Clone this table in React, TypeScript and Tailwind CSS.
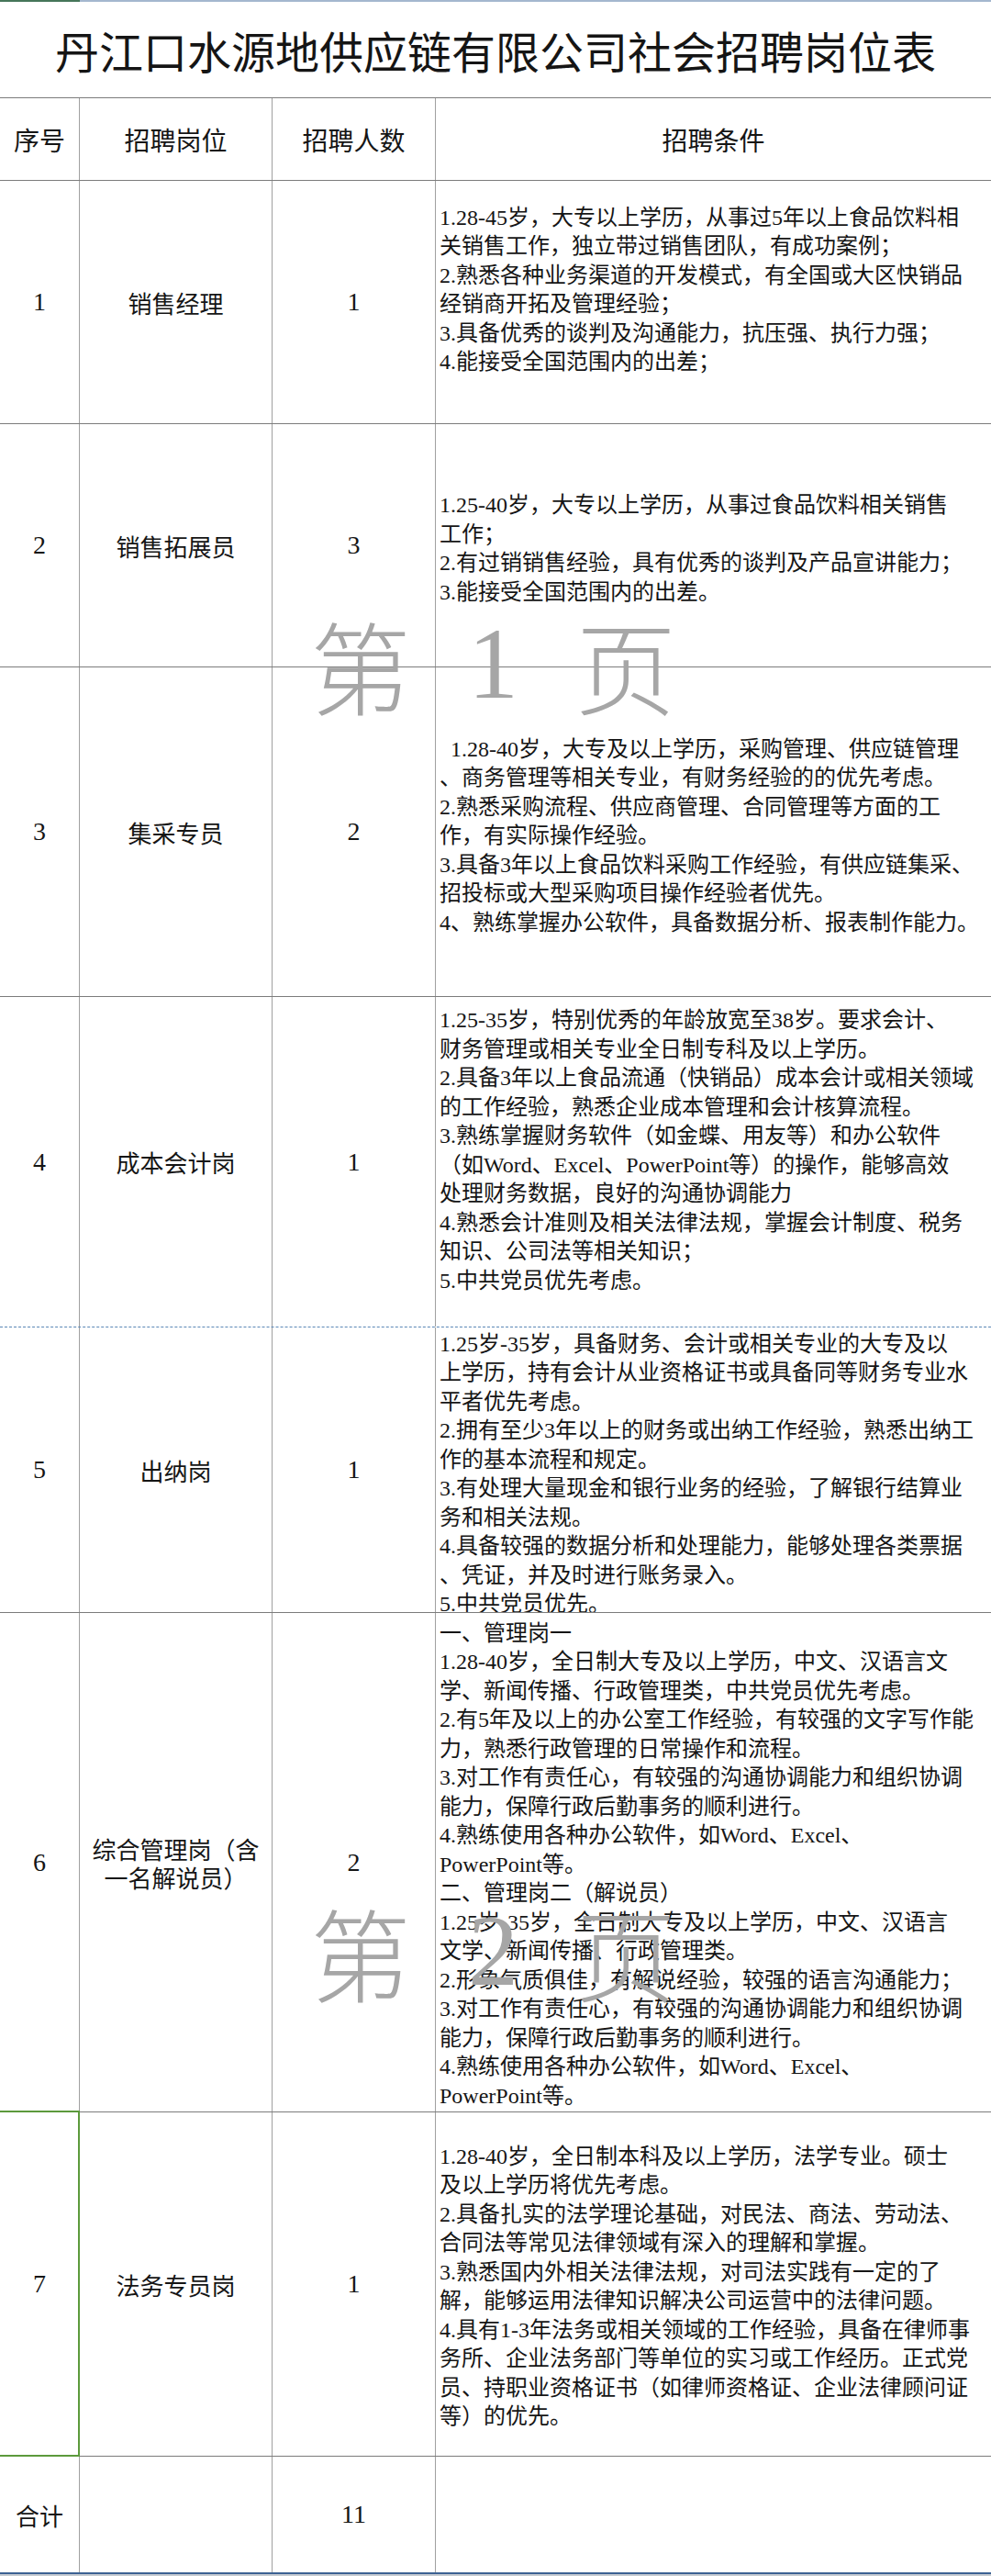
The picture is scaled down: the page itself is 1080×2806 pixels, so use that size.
import React from 'react';

type Row = {
  no: string;
  pos: string[];
  count: string;
  h: string;
  shift: string;
  lines: string[];
  bottom?: string;
  selected?: boolean;
};

const SANS = "font-['Noto_Sans_CJK_SC',sans-serif]";
const BODY = "font-['Liberation_Serif','Noto_Sans_CJK_SC',serif]";

const ROWS: Row[] = [
  {
    no: '1',
    pos: ['销售经理'],
    count: '1',
    h: 'h-[265px]',
    shift: 'pb-[26px]',
    lines: [
      '1.28-45岁，大专以上学历，从事过5年以上食品饮料相',
      '关销售工作，独立带过销售团队，有成功案例；',
      '2.熟悉各种业务渠道的开发模式，有全国或大区快销品',
      '经销商开拓及管理经验；',
      '3.具备优秀的谈判及沟通能力，抗压强、执行力强；',
      '4.能接受全国范围内的出差；',
    ],
  },
  {
    no: '2',
    pos: ['销售拓展员'],
    count: '3',
    h: 'h-[265px]',
    shift: 'pt-[8px]',
    lines: [
      '1.25-40岁，大专以上学历，从事过食品饮料相关销售',
      '工作；',
      '2.有过销销售经验，具有优秀的谈判及产品宣讲能力；',
      '3.能接受全国范围内的出差。',
    ],
  },
  {
    no: '3',
    pos: ['集采专员'],
    count: '2',
    h: 'h-[359px]',
    shift: 'pt-[10px]',
    lines: [
      '\u20021.28-40岁，大专及以上学历，采购管理、供应链管理',
      '、商务管理等相关专业，有财务经验的的优先考虑。',
      '2.熟悉采购流程、供应商管理、合同管理等方面的工',
      '作，有实际操作经验。',
      '3.具备3年以上食品饮料采购工作经验，有供应链集采、',
      '招投标或大型采购项目操作经验者优先。',
      '4、熟练掌握办公软件，具备数据分析、报表制作能力。',
    ],
  },
  {
    no: '4',
    pos: ['成本会计岗'],
    count: '1',
    h: 'h-[360px]',
    shift: 'pb-[24px]',
    bottom: 'border-dashed border-[#5b88b6]',
    lines: [
      '1.25-35岁，特别优秀的年龄放宽至38岁。要求会计、',
      '财务管理或相关专业全日制专科及以上学历。',
      '2.具备3年以上食品流通（快销品）成本会计或相关领域',
      '的工作经验，熟悉企业成本管理和会计核算流程。',
      '3.熟练掌握财务软件（如金蝶、用友等）和办公软件',
      '（如Word、Excel、PowerPoint等）的操作，能够高效',
      '处理财务数据，良好的沟通协调能力',
      '4.熟悉会计准则及相关法律法规，掌握会计制度、税务',
      '知识、公司法等相关知识；',
      '5.中共党员优先考虑。',
    ],
  },
  {
    no: '5',
    pos: ['出纳岗'],
    count: '1',
    h: 'h-[311px]',
    shift: 'pt-[10px]',
    lines: [
      '1.25岁-35岁，具备财务、会计或相关专业的大专及以',
      '上学历，持有会计从业资格证书或具备同等财务专业水',
      '平者优先考虑。',
      '2.拥有至少3年以上的财务或出纳工作经验，熟悉出纳工',
      '作的基本流程和规定。',
      '3.有处理大量现金和银行业务的经验，了解银行结算业',
      '务和相关法规。',
      '4.具备较强的数据分析和处理能力，能够处理各类票据',
      '、凭证，并及时进行账务录入。',
      '5.中共党员优先。',
    ],
  },
  {
    no: '6',
    pos: ['综合管理岗（含', '一名解说员）'],
    count: '2',
    h: 'h-[544px]',
    shift: 'pt-[6px]',
    lines: [
      '一、管理岗一',
      '1.28-40岁，全日制大专及以上学历，中文、汉语言文',
      '学、新闻传播、行政管理类，中共党员优先考虑。',
      '2.有5年及以上的办公室工作经验，有较强的文字写作能',
      '力，熟悉行政管理的日常操作和流程。',
      '3.对工作有责任心，有较强的沟通协调能力和组织协调',
      '能力，保障行政后勤事务的顺利进行。',
      '4.熟练使用各种办公软件，如Word、Excel、',
      'PowerPoint等。',
      '二、管理岗二（解说员）',
      '1.25岁-35岁，全日制大专及以上学历，中文、汉语言',
      '文学、新闻传播、行政管理类。',
      '2.形象气质俱佳，有解说经验，较强的语言沟通能力；',
      '3.对工作有责任心，有较强的沟通协调能力和组织协调',
      '能力，保障行政后勤事务的顺利进行。',
      '4.熟练使用各种办公软件，如Word、Excel、',
      'PowerPoint等。',
    ],
  },
  {
    no: '7',
    pos: ['法务专员岗'],
    count: '1',
    h: 'h-[375px]',
    shift: 'pt-[6px]',
    selected: true,
    lines: [
      '1.28-40岁，全日制本科及以上学历，法学专业。硕士',
      '及以上学历将优先考虑。',
      '2.具备扎实的法学理论基础，对民法、商法、劳动法、',
      '合同法等常见法律领域有深入的理解和掌握。',
      '3.熟悉国内外相关法律法规，对司法实践有一定的了',
      '解，能够运用法律知识解决公司运营中的法律问题。',
      '4.具有1-3年法务或相关领域的工作经验，具备在律师事',
      '务所、企业法务部门等单位的实习或工作经历。正式党',
      '员、持职业资格证书（如律师资格证、企业法律顾问证',
      '等）的优先。',
    ],
  },
];

function Watermark({ digit, top }: { digit: string; top: string }) {
  return (
    <div className={`pointer-events-none absolute left-[338px] ${top} flex items-center gap-[62px] text-[110px] leading-none text-[#a6a6a6]`}>
      <span className={`${SANS} font-light`}>第</span>
      <span className="font-['Liberation_Serif',serif]">{digit}</span>
      <span className={`${SANS} font-light`}>页</span>
    </div>
  );
}

export default function App() {
  return (
    <div className="relative h-[2806px] w-[1080px] overflow-hidden bg-white text-[#151515]">
      {/* title */}
      <div className="flex h-[107px] flex-col border-b border-[#7c7c7c]">
        <div className="flex h-[2px]">
          <div className="w-[87px] bg-[#46765a]" />
          <div className="flex-1 bg-[#a4b7cf]" />
        </div>
        <div className={`flex flex-1 items-center justify-center text-[48px] leading-none ${SANS}`}>
          丹江口水源地供应链有限公司社会招聘岗位表
        </div>
      </div>

      {/* header */}
      <div className={`grid h-[90px] grid-cols-[87px_210px_178px_605px] border-b border-[#7c7c7c] text-[28px] ${SANS}`}>
        <div className="flex items-center justify-center border-r border-[#a0a0a0]">序号</div>
        <div className="flex items-center justify-center border-r border-[#a0a0a0]">招聘岗位</div>
        <div className="flex items-center justify-center border-r border-[#a0a0a0]">招聘人数</div>
        <div className="flex items-center justify-center">招聘条件</div>
      </div>

      {ROWS.map((r) => (
        <div
          key={r.no}
          className={`grid ${r.h} grid-cols-[87px_210px_178px_605px] border-b ${r.bottom ?? 'border-[#7c7c7c]'}`}
        >
          <div className="relative flex items-center justify-center border-r border-[#a0a0a0] font-['Liberation_Serif',serif] text-[28px]">
            {r.no}
            {r.selected && (
              <span className="absolute -top-[2px] -bottom-[1px] left-0 -right-[1px] z-10 border-t-2 border-r-2 border-b-2 border-[#5c9a3c]" />
            )}
          </div>
          <div className={`flex flex-col items-center justify-center border-r border-[#a0a0a0] text-center text-[26px] leading-[31px] ${SANS}`}>
            {r.pos.map((p) => (
              <div key={p}>{p}</div>
            ))}
          </div>
          <div className="flex items-center justify-center border-r border-[#a0a0a0] font-['Liberation_Serif',serif] text-[28px]">
            {r.count}
          </div>
          <div className={`flex flex-col justify-center overflow-hidden pl-[4px] text-[24px] leading-[31.5px] whitespace-pre ${BODY} ${r.shift}`}>
            {r.lines.map((l, i) => (
              <div key={i}>{l}</div>
            ))}
          </div>
        </div>
      ))}

      {/* total */}
      <div className="grid h-[126px] grid-cols-[87px_210px_178px_605px]">
        <div className={`flex items-center justify-center border-r border-[#a0a0a0] text-[26px] ${SANS}`}>合计</div>
        <div className="border-r border-[#a0a0a0]" />
        <div className="flex items-center justify-center border-r border-[#a0a0a0] font-['Liberation_Serif',serif] text-[28px]">
          11
        </div>
        <div />
      </div>
      <div className="h-[2px] bg-[#3d6293]" />
      <div className="h-[2px] bg-[#c9cdd3]" />

      <Watermark digit="1" top="top-[668px]" />
      <Watermark digit="2" top="top-[2070px]" />
    </div>
  );
}
